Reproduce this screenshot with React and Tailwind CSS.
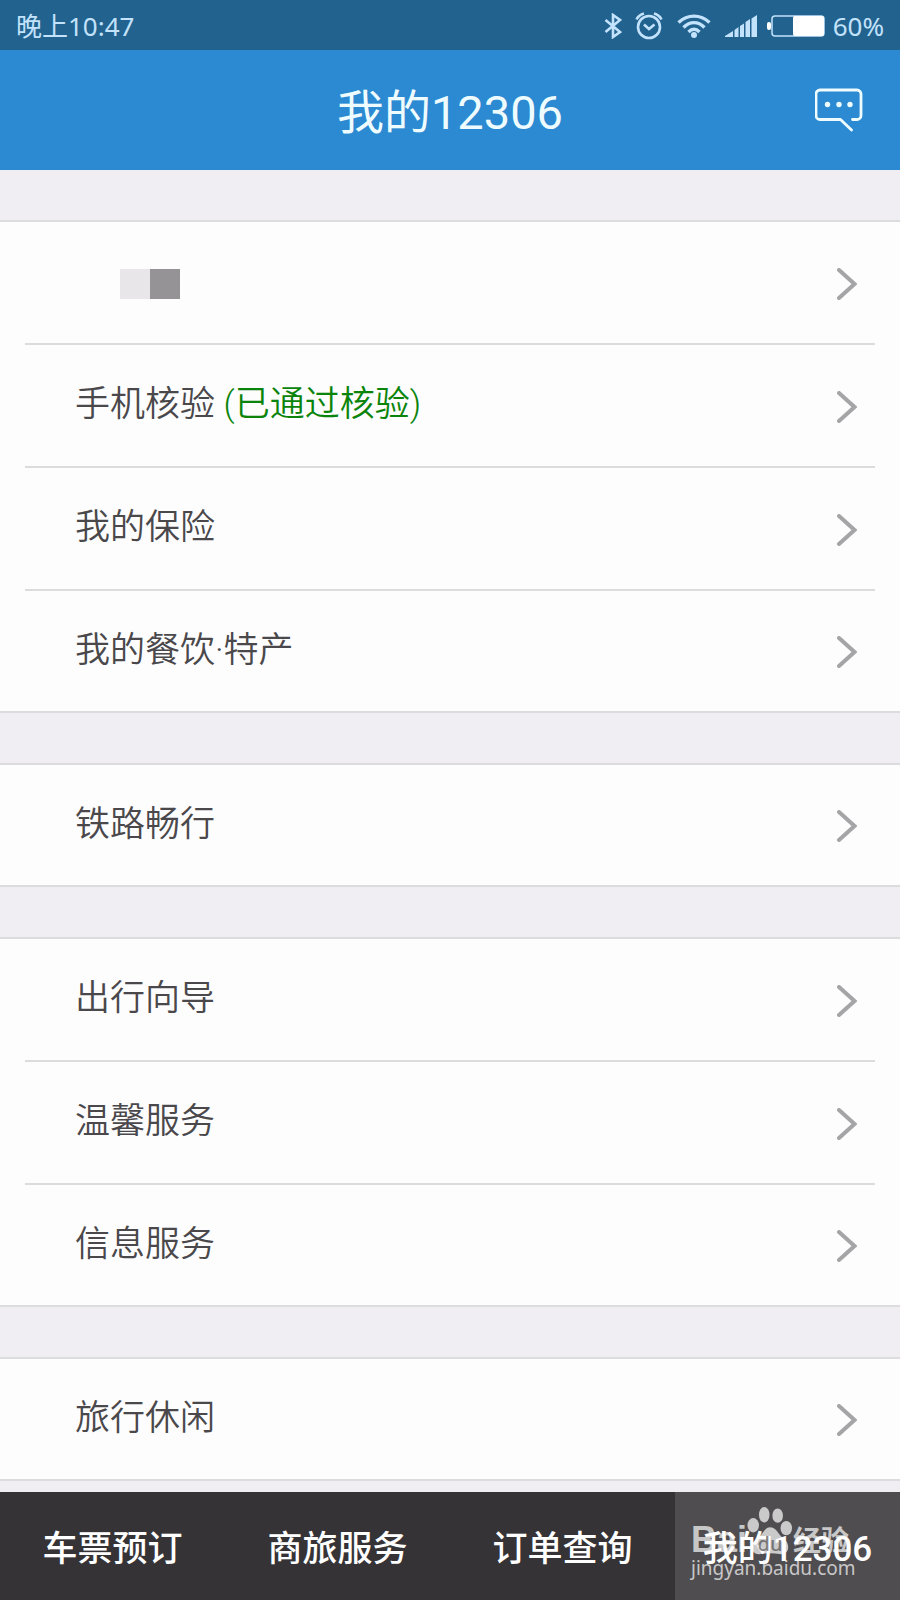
import React, { useState } from 'react';

const sections = [
    [
        { id: 'profile', label: '个人资料', masked: true },
        { id: 'phone', label: '手机核验', status: '(已通过核验)' },
        { id: 'insurance', label: '我的保险' },
        { id: 'food', label: '我的餐饮·特产' },
    ],
    [{ id: 'railway', label: '铁路畅行' }],
    [
        { id: 'guide', label: '出行向导' },
        { id: 'service', label: '温馨服务' },
        { id: 'info', label: '信息服务' },
    ],
    [{ id: 'leisure', label: '旅行休闲' }],
];

const tabs = ['车票预订', '商旅服务', '订单查询', '我的12306'];

const StatusBar = () => (
    <div className="flex h-[50px] items-center justify-between bg-[#22628f] px-4 pt-0.5 font-['Noto_Sans','Noto_Sans_CJK_SC',sans-serif] text-[26px] leading-none text-[#c3e2fb]">
        <span>晚上10:47</span>
        <div className="flex items-center">
            {/* Bluetooth */}
            <svg className="mr-[13px] h-[26px] w-[18px]" viewBox="0 0 18 26" fill="none" stroke="currentColor" strokeWidth="2.6">
                <path d="M1.500 7l14.500 12-7 5V2l7 5L1.500 19" />
            </svg>
            {/* Alarm */}
            <svg className="mr-[14px] h-[28px] w-[28px]" viewBox="0 0 28 28" fill="none" stroke="currentColor" strokeWidth="2.600">
                <circle cx="14" cy="15" r="11" />
                <path d="M9 12.500l5 4.500 5.500-4.500M1.500 7.500C3 4.500 5.500 2.500 9 1.500M26.500 7.500C25 4.500 22.500 2.500 19 1.500" />
            </svg>
            {/* Wifi */}
            <svg className="mr-[14px] h-[24px] w-[34px]" viewBox="0 0 34 24" fill="none" stroke="currentColor" strokeWidth="3.400">
                <path d="M1.500 8.500C10.500 0 23.500 0 32.500 8.500M6.500 13.500C13 7 21 7 27.500 13.500M11.500 18C15 14.500 19 14.500 22.500 18" />
                <circle cx="17" cy="21" r="3" fill="currentColor" stroke="none" />
            </svg>
            {/* Signal */}
            <svg className="mr-[10px] h-[22px] w-[32px]" viewBox="0 0 32 22" fill="currentColor">
                <path d="M0 22v-1l8-5v6zM9.500 22v-7l4-3v10zM15 22V11l4-2.500V22zM20.500 22V7l4.500-3v18zM26.500 22V3.500L32 0v22z" />
            </svg>
            {/* Battery */}
            <svg className="mr-2 h-[22px] w-[58px]" viewBox="0 0 58 22">
                <rect x="0" y="7" width="4" height="8" rx="2" fill="#fff" />
                <rect x="5" y="1" width="52" height="20" rx="3" fill="none" stroke="#c3e2fb" strokeWidth="1.500" />
                <rect x="26" y="1" width="31" height="20" rx="2" fill="#fff" />
            </svg>
            <span>60%</span>
        </div>
    </div>
);

const Header = () => (
    <header className="grid h-[120px] grid-cols-[1fr_auto_1fr] items-center bg-[#2b8ad1] text-[#effcff]">
        <h1 className="col-start-2 pt-1 text-[47px] leading-none">我的12306</h1>
        <button type="button" aria-label="消息" className="mr-[37px] justify-self-end">
            <svg className="h-[44px] w-[48px]" viewBox="0 0 48 44" fill="none" stroke="currentColor" strokeWidth="2.800" strokeLinecap="round" strokeLinejoin="round">
                <path d="M37.500 31.500H42a4 4 0 0 0 4-4V6a4 4 0 0 0-4-4H5a4 4 0 0 0-4 4v21.500a4 4 0 0 0 4 4h20.500l11 10.500" />
                <g fill="currentColor" stroke="none">
                    <circle cx="12.500" cy="16.500" r="2.700" />
                    <circle cx="24" cy="16.500" r="2.700" />
                    <circle cx="35" cy="16.500" r="2.700" />
                </g>
            </svg>
        </button>
    </header>
);

const Row = ({ item }) => (
    <li className="group h-[123px] px-[25px] last:h-[122px] last:border-b-2 last:border-[#dcdbde] last:px-0">
        <a
            href={`#${item.id}`}
            aria-label={item.label}
            className="flex h-full items-center justify-between border-b-2 border-[#dcdbde] pt-0.5 pr-[18px] pl-[50px] group-last:border-b-0 group-last:pr-[43px] group-last:pl-[75px]"
        >
            {item.masked ? (
                <span className="ml-[45px] flex">
                    <span className="size-[30px] bg-[#e8e6e9]" />
                    <span className="size-[30px] bg-[#959395]" />
                </span>
            ) : (
                <span className="pb-1 text-[35px] leading-none font-[350] text-[#4a484b]">
                    {item.label}
                    {item.status && <span className="text-[#0b840b]"> {item.status}</span>}
                </span>
            )}
            <svg className="h-[32px] w-[20px]" viewBox="0 0 20 32" fill="none" stroke="#a5a5a7" strokeWidth="4" strokeLinecap="round">
                <path d="M2 2l15.500 14L2 30" />
            </svg>
        </a>
    </li>
);

const Watermark = () => (
    <div className="pointer-events-none absolute right-[49px] bottom-[20px] w-[160px] font-['Noto_Sans','Noto_Sans_CJK_SC',sans-serif] whitespace-nowrap text-white/70">
        <div className="flex items-end">
            <span className="font-['Liberation_Sans',sans-serif] text-[36px] leading-8 font-bold">Bai</span>
            {/* Paw with "du" on the pad */}
            <span className="relative flex justify-center">
                <svg className="h-[50px] w-[46px]" viewBox="0 0 48 50" fill="currentColor">
                    <ellipse cx="6.500" cy="19" rx="6" ry="7.500" />
                    <ellipse cx="18" cy="8" rx="5.500" ry="8" />
                    <ellipse cx="32" cy="9" rx="5.500" ry="7.500" />
                    <ellipse cx="41" cy="22" rx="6" ry="7.500" />
                    <path d="M24 21c6 0 8 6 12 10 4 3 7 6 7 11 0 6-5 8-9 7-7-1-13-1-20 0-5 1-9-2-9-7s4-8 8-11c4-4 6-10 11-10z" />
                </svg>
                <span className="absolute bottom-0 text-[20px] leading-6 font-medium text-[#4f4d4f]/70">du</span>
            </span>
            <span className="text-[28px] leading-8 font-bold">经验</span>
        </div>
        <div className="text-[19px] leading-6">jingyan.baidu.com</div>
    </div>
);

const App = () => {
    const [activeTab, setActiveTab] = useState('我的12306');

    return (
        <div className="flex min-h-screen flex-col bg-[#f0eef3] font-[Roboto,'Noto_Sans_CJK_SC',sans-serif]">
            <StatusBar />
            <Header />

            <main className="flex flex-col gap-[50px] pt-[50px] pb-[10px]">
                {sections.map((items) => (
                    <ul key={items[0].id} className="border-t-2 border-[#dcdbde] bg-[#fdfdfe]">
                        {items.map((item) => (
                            <Row key={item.id} item={item} />
                        ))}
                    </ul>
                ))}
            </main>

            {/* Bottom tabs */}
            <nav className="sticky bottom-0 mt-auto grid h-[108px] grid-cols-4 bg-[#353336]">
                {tabs.map((tab) => (
                    <button
                        key={tab}
                        type="button"
                        onClick={() => setActiveTab(tab)}
                        className={`pt-1.5 text-[35px] leading-none font-medium text-white ${activeTab === tab ? 'bg-[#4f4d4f]' : ''}`}
                    >
                        {tab}
                    </button>
                ))}
                <Watermark />
            </nav>
        </div>
    );
};

export default App;
